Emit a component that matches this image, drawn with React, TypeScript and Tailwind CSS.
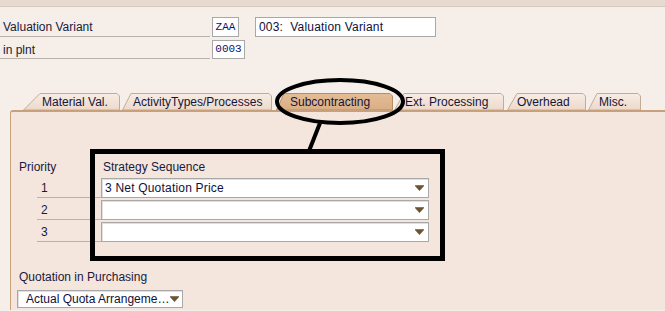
import React from "react";

const font = "font-['Liberation_Sans',Arial,sans-serif]";

type Tab = { label: string; ml: string; w: string; pl: string; slant: number; width: number; active?: boolean };

const tabs: Tab[] = [
  { label: "Material Val.", ml: "ml-[23px]", w: "w-[97px]", pl: "pl-[19px]", slant: 17, width: 97 },
  { label: "ActivityTypes/Processes", ml: "ml-[2px]", w: "w-[150px]", pl: "pl-[11px]", slant: 9, width: 150 },
  { label: "Subcontracting", ml: "ml-[4px]", w: "w-[117px]", pl: "pl-[14px]", slant: 8, width: 117, active: true },
  { label: "Ext. Processing", ml: "ml-[1px]", w: "w-[110px]", pl: "pl-[11px]", slant: 10, width: 110 },
  { label: "Overhead", ml: "ml-[3px]", w: "w-[79px]", pl: "pl-[10px]", slant: 10, width: 79 },
  { label: "Misc.", ml: "ml-[2px]", w: "w-[53px]", pl: "pl-[11px]", slant: 9, width: 53 },
];

function Arrow() {
  return (
    <svg width="9" height="6" viewBox="0 0 9 6" className="shrink-0">
      <rect x="0" y="0" width="9" height="1" fill="#8a7a60" />
      <polygon points="0,1 9,1 4.5,6" fill="#6b5431" />
    </svg>
  );
}

function Select({ value, cls }: { value?: string; cls: string }) {
  return (
    <div
      className={`${cls} flex items-center justify-between gap-[1px] border border-[#a8a8a8] bg-white pr-[4px] shadow-[inset_1px_1px_0_#e0e0e0] text-[12px] text-[#10103a]`}
    >
      <span className="whitespace-nowrap">{value}</span>
      <Arrow />
    </div>
  );
}

export default function App() {
  return (
    <div className={`relative h-[311px] w-[665px] overflow-hidden bg-[#f5eee9] ${font} text-[12px] text-[#1a1a3a]`}>
      <div className="h-[7px] border-b border-[#d9c9bd] bg-[#e7dad1]" />

      <div className="mt-[10px] flex items-end">
        <div className="flex h-[19px] w-[210px] items-center border-b border-[#b9b2ac] pl-[3px]">Valuation Variant</div>
        <div className="ml-[2px] flex h-[20px] w-[27px] items-center justify-center border border-[#a8a8a8] bg-white font-['Liberation_Mono',monospace] text-[11px] text-[#10106a]">
          ZAA
        </div>
        <div className="ml-[16px] flex h-[20px] w-[181px] items-center border border-[#a8a8a8] bg-white pl-[3px] tracking-[0.2px] text-[#10103a]">
          003:&nbsp; Valuation Variant
        </div>
      </div>
      <div className="mt-[3px] flex items-end">
        <div className="flex h-[18px] w-[210px] items-center border-b border-[#b9b2ac] pl-[3px]">in plnt</div>
        <div className="ml-[2px] flex h-[19px] w-[33px] items-center justify-center border border-[#a8a8a8] bg-white font-['Liberation_Mono',monospace] text-[11px] text-[#10106a]">
          0003
        </div>
      </div>

      <div className="mt-[34px] flex h-[17px] items-end">
        {tabs.map((t) => (
          <div key={t.label} className={`relative h-[17px] ${t.ml} ${t.w} ${t.pl} flex items-center`}>
            <svg className="absolute inset-0" width={t.width} height="17" viewBox={`0 0 ${t.width} 17`}>
              <defs>
                <linearGradient id={`g-${t.width}`} x1="0" y1="0" x2="0" y2="1">
                  <stop offset="0" stopColor={t.active ? "#e4bd96" : "#f7ece4"} />
                  <stop offset="1" stopColor={t.active ? "#d9ae85" : "#ecdacb"} />
                </linearGradient>
              </defs>
              <polygon
                points={`0.5,17 ${t.slant},0.5 ${t.width - 3},0.5 ${t.width - 0.5},3 ${t.width - 0.5},17`}
                fill={`url(#g-${t.width})`}
                stroke={t.active ? "#b98d63" : "#c4ab95"}
                strokeWidth="1"
              />
            </svg>
            <span className="relative text-[#15153a]">{t.label}</span>
          </div>
        ))}
      </div>

      <div className="ml-[10px] h-[200px] rounded-tl-[3px] border-l border-t-2 border-[#c9a07c] bg-[#f4e6dd] pl-[8px] pt-[48px]">
        <div className="flex h-[14px] items-center">
          <span className="w-[84px]">Priority</span>
          <span>Strategy Sequence</span>
        </div>
        <div className="mt-[4px] flex flex-col gap-[2px]">
          {[
            ["1", "3 Net Quotation Price"],
            ["2", ""],
            ["3", ""],
          ].map(([n, v]) => (
            <div key={n} className="flex items-end">
              <div className="ml-[18px] flex h-[20px] w-[64px] items-center border-b border-[#b9b2ac] pl-[4px]">{n}</div>
              <Select value={v} cls="h-[20px] w-[328px] pl-[3px] tracking-[0.2px]" />
            </div>
          ))}
        </div>
        <div className="mt-[28px] flex h-[14px] items-center">Quotation in Purchasing</div>
        <div className="mt-[6px] -ml-[2px]">
          <Select value="Actual Quota Arrangeme…" cls="h-[18px] w-[166px] pl-[8px]" />
        </div>
      </div>

      <svg className="pointer-events-none absolute left-0 top-0" width="665" height="311" viewBox="0 0 665 311">
        <ellipse cx="340" cy="101.5" rx="63" ry="21.5" fill="none" stroke="#000" strokeWidth="4" />
        <line x1="320" y1="123" x2="309" y2="151" stroke="#000" strokeWidth="4" />
        <rect x="92.5" y="151.5" width="350" height="107" fill="none" stroke="#000" strokeWidth="5" />
      </svg>
    </div>
  );
}
